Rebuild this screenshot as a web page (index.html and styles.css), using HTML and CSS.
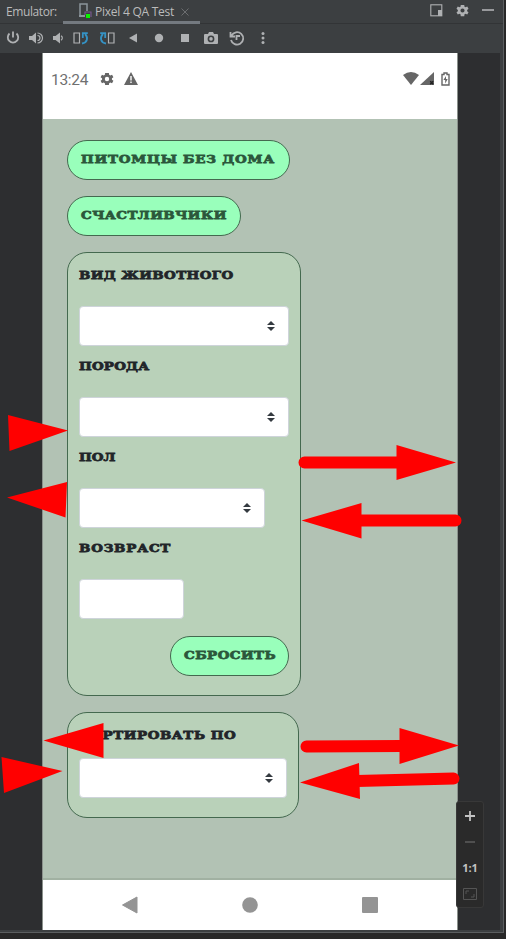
FILE: index.html
```html
<!DOCTYPE html>
<html lang="ru">
<head>
<meta charset="utf-8">
<title>Emulator</title>
<link rel="stylesheet" href="styles.css">
</head>
<body>
<div class="window">
  <header class="tabs">
    <span class="caption">Emulator:</span>
    <div class="tab">
      <svg width="14" height="16" viewBox="0 0 14 16"><path d="M7 13H2V1h7v7" fill="none" stroke="#8b959b" stroke-width="1.5"/><path d="M1 12h6v2H1z" fill="#8b959b"/><path d="M7 12V9h6v5" fill="none" stroke="#76578d" stroke-width="1.2"/><rect x="8" y="11" width="4" height="4" fill="#0bf000"/></svg>
      <span class="tab-name">Pixel 4 QA Test</span>
      <svg class="close" width="8" height="8" viewBox="0 0 8 8"><path d="M.5.5l7 7M7.500.5l-7 7" stroke="#6c6e70"/></svg>
    </div>
    <div class="actions">
      <svg width="13" height="13" viewBox="0 0 13 13"><rect x=".8" y=".8" width="11" height="11" fill="none" stroke="#afb1b3" stroke-width="1.1"/><path d="M8 6h4v6H8z" fill="#afb1b3"/></svg>
      <svg width="15" height="15" viewBox="0 0 24 24"><path class="gear" fill-rule="evenodd" d="M19.400 13a7 7 0 0 0 0-2l2.200-1.700-2-3.600-2.700 1.100-1.700-1L14.800 3H9.200l-.4 2.800-1.700 1-2.700-1.100-2 3.600L4.600 11v2l-2.200 1.700 2 3.600 2.700-1.100 1.700 1 .4 2.800h5.600l.4-2.800 1.700-1 2.700 1.100 2-3.600zM12 8.700a3.300 3.300 0 1 1 0 6.600 3.300 3.300 0 0 1 0-6.600z"/></svg>
      <svg width="12" height="4" viewBox="0 0 12 4"><path d="M0 2h12" stroke="#afb1b3" stroke-width="1.600"/></svg>
    </div>
  </header>
  <div class="toolbar">
    <svg viewBox="0 0 18 18"><path d="M9 2.500v6M5.500 4.500a5.200 5.200 0 1 0 7 0" class="ln"/></svg>
    <svg viewBox="0 0 18 18"><path class="fl" d="M2 7h3l4-3.500v11L5 11H2z"/><path class="ln thin" d="M10.500 4a5 5 0 0 1 0 10M10.500 6.500a2.500 2.500 0 0 1 0 5"/></svg>
    <svg viewBox="0 0 18 18"><path class="fl" d="M4 7h2.500L11 3.500v11L6.500 11H4z"/><path class="ln thin" d="M12 6.800a2.500 2.500 0 0 1 0 4.400"/></svg>
    <svg viewBox="0 0 18 18"><path class="ln thin" d="M2 4h5.500v10H2z"/><path class="ln blue" d="M10 14.500c5.500-1 6.500-6 3-9.500M10.800 9V4.200h5"/></svg>
    <svg viewBox="0 0 18 18"><path class="ln thin" d="M10.500 4H16v10h-5.500z"/><path class="ln blue" d="M8 14.500C2.500 13.500 1.500 8.500 5 5M7.200 9V4.200h-5"/></svg>
    <svg viewBox="0 0 18 18"><path class="fl" d="M5 9l8-4.500v9z"/></svg>
    <svg viewBox="0 0 18 18"><circle class="fl" cx="9" cy="9" r="4.200"/></svg>
    <svg viewBox="0 0 18 18"><rect class="fl" x="5" y="5" width="8" height="8"/></svg>
    <svg viewBox="0 0 18 18"><path class="fl" fill-rule="evenodd" d="M3 5h3l1-2h4l1 2h3q1 0 1 1v8q0 1-1 1H3q-1 0-1-1V6q0-1 1-1zm6 1.500a3.400 3.400 0 1 0 0 6.800 3.400 3.400 0 0 0 0-6.800z"/><circle class="fl" cx="9" cy="9.900" r="1.800"/></svg>
    <svg viewBox="0 0 18 18"><path class="ln" d="M3.500 6.500A6.200 6.200 0 1 1 3 11M2.500 3v4.500H7M12 7H8.500v4"/></svg>
    <svg viewBox="0 0 18 18"><circle class="fl" cx="9" cy="4.500" r="1.500"/><circle class="fl" cx="9" cy="9" r="1.500"/><circle class="fl" cx="9" cy="13.500" r="1.500"/></svg>
  </div>

  <main class="phone">
    <div class="status">
      <span class="clock">13:24</span>
      <svg width="16" height="16" viewBox="0 0 24 24"><path class="dark" fill-rule="evenodd" d="M19.400 13a7 7 0 0 0 0-2l2.200-1.700-2-3.600-2.700 1.100-1.700-1L14.800 3H9.200l-.4 2.800-1.700 1-2.700-1.100-2 3.600L4.600 11v2l-2.200 1.700 2 3.600 2.700-1.100 1.700 1 .4 2.800h5.600l.4-2.800 1.700-1 2.700 1.100 2-3.600zM12 8.700a3.300 3.300 0 1 1 0 6.600 3.300 3.300 0 0 1 0-6.600z"/></svg>
      <svg class="warn" width="14" height="13" viewBox="0 0 14 13"><path class="dark" d="M7 0l7 13H0z"/><path d="M7 4v4.500M7 9.500V11" stroke="#fff" stroke-width="1.400"/></svg>
      <div class="signals">
        <svg width="16" height="13" viewBox="0 0 16 13"><path class="dark" d="M0 3Q8-3 16 3L8 13z"/></svg>
        <svg width="14" height="13" viewBox="0 0 14 13"><path class="dark" d="M14 0v13H0z"/><path d="M10.200 9.200l3 3m0-3l-3 3" stroke="#222" stroke-width="1.400"/></svg>
        <svg class="battery" width="9" height="14" viewBox="0 0 9 14"><path d="M1 2.500h2V1h3v1.500h2V13H1z" fill="none" stroke="#666" stroke-width="1.400"/><path class="dark" d="M5 4L2.400 8h1.800v3.500L6.700 7H5z"/></svg>
      </div>
    </div>
    <div class="page">
      <button class="pill pets"><span>ПИТОМЦЫ БЕЗ ДОМА</span></button>
      <button class="pill lucky"><span>СЧАСТЛИВЧИКИ</span></button>
      <section class="panel filters">
        <div class="label kind"><span>ВИД ЖИВОТНОГО</span></div>
        <div class="field select"><svg class="caret" viewBox="0 0 8 10"><path d="M0 4l4-4 4 4zM0 6h8l-4 4z"/></svg></div>
        <div class="label breed"><span>ПОРОДА</span></div>
        <div class="field select"><svg class="caret" viewBox="0 0 8 10"><path d="M0 4l4-4 4 4zM0 6h8l-4 4z"/></svg></div>
        <div class="label sex"><span>ПОЛ</span></div>
        <div class="field select short"><svg class="caret" viewBox="0 0 8 10"><path d="M0 4l4-4 4 4zM0 6h8l-4 4z"/></svg></div>
        <div class="label age"><span>ВОЗВРАСТ</span></div>
        <div class="field number"></div>
        <button class="pill reset"><span>СБРОСИТЬ</span></button>
      </section>
      <section class="panel sorting">
        <div class="label sort"><span>СОРТИРОВАТЬ ПО</span></div>
        <div class="field select"><svg class="caret" viewBox="0 0 8 10"><path d="M0 4l4-4 4 4zM0 6h8l-4 4z"/></svg></div>
      </section>
    </div>
    <nav class="nav">
      <svg viewBox="0 0 18 18"><path d="M1.500 9L16 1v16z" stroke="#949494" stroke-linejoin="round"/></svg>
      <svg viewBox="0 0 18 18"><circle cx="9" cy="9" r="7.800"/></svg>
      <svg viewBox="0 0 18 18"><rect x="1" y="1" width="16" height="16" rx="1"/></svg>
    </nav>
  </main>
</div>

<svg class="arrows" viewBox="0 0 506 939">
  <path d="M8 415l60 15.500L9.500 451zM7 497.500L67 482l-1.500 35.500zM396.500 445l59.500 17.500-59.500 17.500zM361.500 503v35.500L301.500 520.500zM103.500 723v35L43.500 740.500zM1.500 757l61 14L4 793zM399.500 728l59.500 17.500-59.500 18.500zM359 763l1 36-60-16.500z"/>
  <path class="shaft" d="M304.500 462.500h95M358 520.500h97.500M306.500 746.500l95-.5M357 781l96.500-2.500"/>
</svg>

<aside class="zoom">
  <svg viewBox="0 0 16 16"><path d="M8 3v10M3 8h10" stroke="#c3c3c3" stroke-width="1.800"/></svg>
  <svg viewBox="0 0 16 16"><path d="M3 8h10" stroke="#5c5c5c" stroke-width="1.500"/></svg>
  <span>1:1</span>
  <svg viewBox="0 0 16 16"><path d="M1.500 2.500h13v11h-13zM4 8V5h3M9 11h3V8" fill="none" stroke="#555"/></svg>
</aside>
</body>
</html>
```
FILE: styles.css
```css
* { box-sizing: border-box; }
body { margin: 0; width: 506px; height: 939px; overflow: hidden; background: #282828; font-family: "Open Sans", sans-serif; }
svg { display: block; flex: none; }
.window { width: 504px; height: 933px; background: #2d2e30; border-right: 1px solid #5b5e60; border-bottom: 1px solid #5b5e60; box-shadow: inset -3px -2px #3c3f41; }
.tabs { height: 24px; display: flex; background: #3c3f41; border-bottom: 1px solid #323436; color: #bbb; font-size: 12px; line-height: 23px; }
.caption { width: 63px; padding-left: 6px; letter-spacing: -.4px; }
.tab { width: 137px; height: 24px; display: flex; padding: 3px 0 0 15px; border-bottom: 3px solid #747a80; }
.tab-name { width: 80px; margin: -3px 0 0 3px; letter-spacing: -.25px; white-space: nowrap; }
.close { margin: 5px 0 0 6px; }
.actions { flex: 1; display: flex; align-items: center; justify-content: flex-end; gap: 12px; padding: 0 9px 3px 0; }
.gear { fill: #afb1b3; }
.toolbar { height: 29px; padding-bottom: 2px; background: #3c3f41; display: grid; grid-template-columns: 25px 22px 21px 26px 26px 26px 26px 26px 26px 25px 28px; align-items: center; justify-items: center; }
.toolbar svg { width: 18px; height: 18px; }
.fl { fill: #afb1b3; }
.ln { fill: none; stroke: #afb1b3; stroke-width: 1.800; }
.thin { stroke-width: 1.200; }
.blue { stroke: #3592c4; }
.phone { width: 416px; height: 877px; margin-left: 42px; background: #fff; border: solid #8b918c; border-width: 0 1px; }
.status { height: 66px; padding: 18px 7px 0 8px; display: flex; align-items: flex-start; color: #707070; }
.clock { width: 48px; font: 15.500px/18px Roboto, sans-serif; letter-spacing: -.3px; }
.dark { fill: #666; }
.warn { margin: 1px 0 0 9px; }
.signals { margin: 1px 0 0 auto; display: flex; gap: 1px; }
.battery { margin-left: 6px; }
.page { height: 761px; padding: 21px 24px; background: #b2c2b4; border-bottom: 2px solid #a1b1a2; display: flex; flex-direction: column; align-items: flex-start; gap: 16px; }
.pill, .label { font: bold 12px "DejaVu Serif", serif; white-space: nowrap; }
.pill span, .label span { display: inline-block; transform: translateY(1px) scale(1.12, .98); transform-origin: left; }
.pill { display: block; height: 40px; padding: 0 0 4px 13px; border: 1px solid #44694f; border-radius: 20px; background: #99ffbb; color: #2b573b; text-align: left; -webkit-text-stroke: .8px; }
.pets { width: 223px; letter-spacing: .7px; }
.lucky { width: 174px; letter-spacing: .4px; }
.panel { border: 1px solid #44694f; border-radius: 20px; background: #b9d1b9; padding: 2px 11px 19px; }
.filters { width: 234px; height: 444px; }
.sorting { width: 232px; height: 106px; padding-top: 0; }
.label { height: 51px; line-height: 39px; color: #212529; -webkit-text-stroke: .8px; }
.kind { letter-spacing: .35px; }
.breed { letter-spacing: .2px; }
.age { letter-spacing: .7px; }
.sort { height: 45px; line-height: 43px; letter-spacing: .5px; }
.field { height: 40px; border: 1px solid #ced4da; border-radius: 4px; background: #fff; }
.select { display: flex; align-items: center; justify-content: flex-end; padding-right: 13px; }
.caret { width: 8px; height: 10px; fill: #343a40; }
.short { width: 186px; }
.number { width: 105px; }
.reset { width: 119px; margin: 17px 0 0 auto; letter-spacing: .4px; }
.nav { height: 50px; padding-left: 78px; display: flex; align-items: center; gap: 102px; }
.nav svg { width: 18px; height: 18px; fill: #949494; }
.arrows { position: absolute; left: 0; top: 0; width: 506px; height: 939px; fill: #f00; }
.shaft { stroke: #f00; stroke-width: 12; stroke-linecap: round; }
.zoom { position: absolute; left: 456px; top: 801px; width: 28px; height: 107px; padding-top: 6px; display: flex; flex-direction: column; align-items: center; gap: 10px; background: #2a2a2a; border: 1px solid #383838; border-radius: 3px; color: #c3c3c3; font: bold 11px/16px "Open Sans", sans-serif; }
.zoom svg { width: 16px; height: 16px; }
```
